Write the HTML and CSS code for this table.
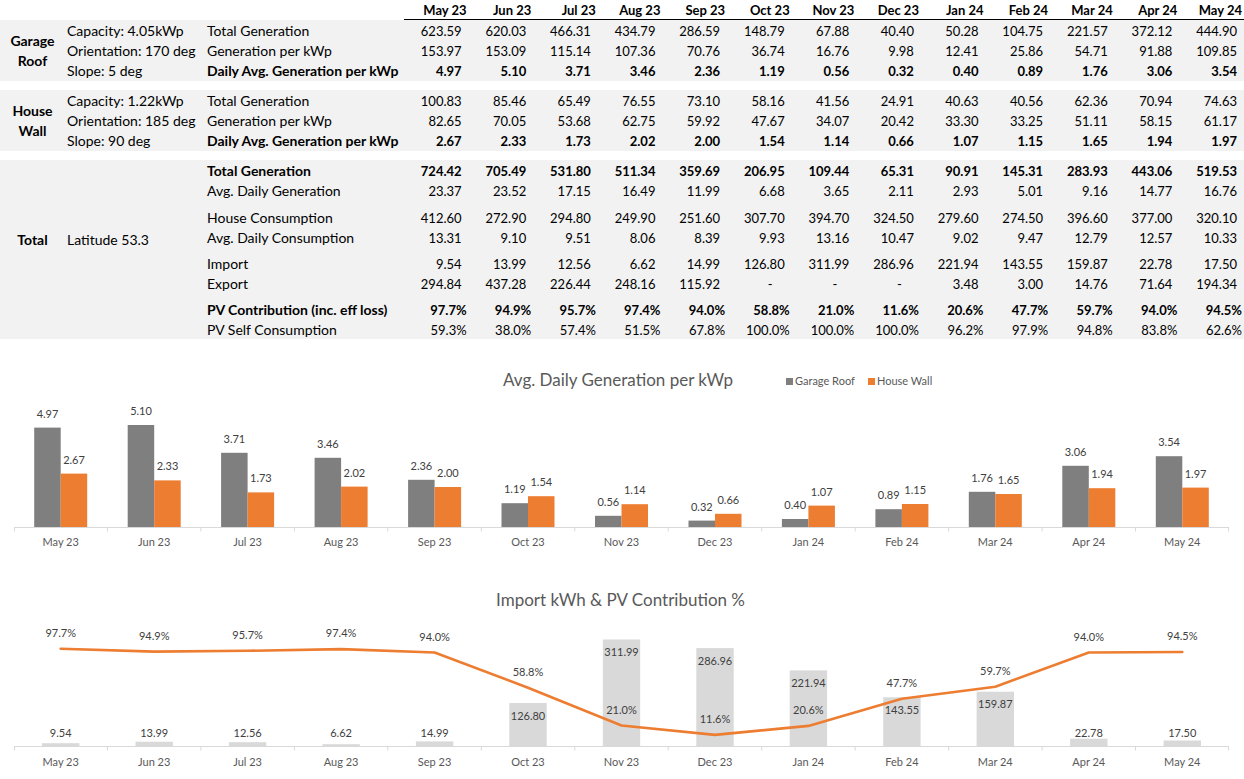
FILE: index.html
```html
<!DOCTYPE html>
<html>
<head>
<meta charset="utf-8">
<title>PV Generation</title>
<link rel="stylesheet" href="styles.css">
</head>
<body>
<div class="sheet">
  <div class="head">
    <div class="spacer"></div>
    <div class="m">May 23</div><div class="m">Jun 23</div><div class="m">Jul 23</div><div class="m">Aug 23</div><div class="m">Sep 23</div><div class="m">Oct 23</div><div class="m">Nov 23</div><div class="m">Dec 23</div><div class="m">Jan 24</div><div class="m">Feb 24</div><div class="m">Mar 24</div><div class="m">Apr 24</div><div class="m">May 24</div>
  </div>

  <div class="block">
    <div class="a">Garage<br>Roof</div>
    <div class="b"><div>Capacity: 4.05kWp</div><div>Orientation: 170 deg</div><div>Slope: 5 deg</div></div>
    <div class="rows">
      <div class="row"><span class="l">Total Generation</span><span>623.59</span><span>620.03</span><span>466.31</span><span>434.79</span><span>286.59</span><span>148.79</span><span>67.88</span><span>40.40</span><span>50.28</span><span>104.75</span><span>221.57</span><span>372.12</span><span>444.90</span></div>
      <div class="row"><span class="l">Generation per kWp</span><span>153.97</span><span>153.09</span><span>115.14</span><span>107.36</span><span>70.76</span><span>36.74</span><span>16.76</span><span>9.98</span><span>12.41</span><span>25.86</span><span>54.71</span><span>91.88</span><span>109.85</span></div>
      <div class="row bold"><span class="l">Daily Avg. Generation per kWp</span><span>4.97</span><span>5.10</span><span>3.71</span><span>3.46</span><span>2.36</span><span>1.19</span><span>0.56</span><span>0.32</span><span>0.40</span><span>0.89</span><span>1.76</span><span>3.06</span><span>3.54</span></div>
    </div>
  </div>

  <div class="block">
    <div class="a">House<br>Wall</div>
    <div class="b"><div>Capacity: 1.22kWp</div><div>Orientation: 185 deg</div><div>Slope: 90 deg</div></div>
    <div class="rows">
      <div class="row"><span class="l">Total Generation</span><span>100.83</span><span>85.46</span><span>65.49</span><span>76.55</span><span>73.10</span><span>58.16</span><span>41.56</span><span>24.91</span><span>40.63</span><span>40.56</span><span>62.36</span><span>70.94</span><span>74.63</span></div>
      <div class="row"><span class="l">Generation per kWp</span><span>82.65</span><span>70.05</span><span>53.68</span><span>62.75</span><span>59.92</span><span>47.67</span><span>34.07</span><span>20.42</span><span>33.30</span><span>33.25</span><span>51.11</span><span>58.15</span><span>61.17</span></div>
      <div class="row bold"><span class="l">Daily Avg. Generation per kWp</span><span>2.67</span><span>2.33</span><span>1.73</span><span>2.02</span><span>2.00</span><span>1.54</span><span>1.14</span><span>0.66</span><span>1.07</span><span>1.15</span><span>1.65</span><span>1.94</span><span>1.97</span></div>
    </div>
  </div>

  <div class="block total">
    <div class="a top">Total</div>
    <div class="b top"><div>Latitude 53.3</div></div>
    <div class="rows">
      <div class="grp">
        <div class="row bold"><span class="l">Total Generation</span><span>724.42</span><span>705.49</span><span>531.80</span><span>511.34</span><span>359.69</span><span>206.95</span><span>109.44</span><span>65.31</span><span>90.91</span><span>145.31</span><span>283.93</span><span>443.06</span><span>519.53</span></div>
        <div class="row"><span class="l">Avg. Daily Generation</span><span>23.37</span><span>23.52</span><span>17.15</span><span>16.49</span><span>11.99</span><span>6.68</span><span>3.65</span><span>2.11</span><span>2.93</span><span>5.01</span><span>9.16</span><span>14.77</span><span>16.76</span></div>
      </div>
      <div class="grp g7">
        <div class="row"><span class="l">House Consumption</span><span>412.60</span><span>272.90</span><span>294.80</span><span>249.90</span><span>251.60</span><span>307.70</span><span>394.70</span><span>324.50</span><span>279.60</span><span>274.50</span><span>396.60</span><span>377.00</span><span>320.10</span></div>
        <div class="row"><span class="l">Avg. Daily Consumption</span><span>13.31</span><span>9.10</span><span>9.51</span><span>8.06</span><span>8.39</span><span>9.93</span><span>13.16</span><span>10.47</span><span>9.02</span><span>9.47</span><span>12.79</span><span>12.57</span><span>10.33</span></div>
      </div>
      <div class="grp g6">
        <div class="row"><span class="l">Import</span><span>9.54</span><span>13.99</span><span>12.56</span><span>6.62</span><span>14.99</span><span>126.80</span><span>311.99</span><span>286.96</span><span>221.94</span><span>143.55</span><span>159.87</span><span>22.78</span><span>17.50</span></div>
        <div class="row"><span class="l">Export</span><span>294.84</span><span>437.28</span><span>226.44</span><span>248.16</span><span>115.92</span><span class="dash">-</span><span class="dash">-</span><span class="dash">-</span><span>3.48</span><span>3.00</span><span>14.76</span><span>71.64</span><span>194.34</span></div>
      </div>
      <div class="grp g6">
        <div class="row bold pct"><span class="l">PV Contribution (inc. eff loss)</span><span>97.7%</span><span>94.9%</span><span>95.7%</span><span>97.4%</span><span>94.0%</span><span>58.8%</span><span>21.0%</span><span>11.6%</span><span>20.6%</span><span>47.7%</span><span>59.7%</span><span>94.0%</span><span>94.5%</span></div>
        <div class="row pct"><span class="l">PV Self Consumption</span><span>59.3%</span><span>38.0%</span><span>57.4%</span><span>51.5%</span><span>67.8%</span><span>100.0%</span><span>100.0%</span><span>100.0%</span><span>96.2%</span><span>97.9%</span><span>94.8%</span><span>83.8%</span><span>62.6%</span></div>
      </div>
    </div>
  </div>

  <svg class="chart" viewBox="0 339 1244 221" width="1244" height="221">
    <text class="title" x="618" y="386">Avg. Daily Generation per kWp</text>
    <rect x="786" y="378" width="7" height="7" fill="#7f7f7f"/>
    <text class="leg" x="795" y="385">Garage Roof</text>
    <rect x="868" y="378" width="7" height="7" fill="#ed7d31"/>
    <text class="leg" x="877" y="385">House Wall</text>
    <g fill="#7f7f7f">
      <rect x="34.2" y="427.6" width="26.5" height="99.4"/>
      <rect x="127.7" y="425" width="26.5" height="102"/>
      <rect x="221.1" y="452.8" width="26.5" height="74.2"/>
      <rect x="314.6" y="457.8" width="26.5" height="69.2"/>
      <rect x="408.1" y="479.8" width="26.5" height="47.2"/>
      <rect x="501.5" y="503.2" width="26.5" height="23.8"/>
      <rect x="595" y="515.8" width="26.5" height="11.2"/>
      <rect x="688.5" y="520.6" width="26.5" height="6.4"/>
      <rect x="781.9" y="519" width="26.5" height="8"/>
      <rect x="875.4" y="509.2" width="26.5" height="17.8"/>
      <rect x="968.8" y="491.8" width="26.5" height="35.2"/>
      <rect x="1062.3" y="465.8" width="26.5" height="61.2"/>
      <rect x="1155.8" y="456.2" width="26.5" height="70.8"/>
    </g>
    <g fill="#ed7d31">
      <rect x="60.7" y="473.6" width="26.5" height="53.4"/>
      <rect x="154.2" y="480.4" width="26.5" height="46.6"/>
      <rect x="247.6" y="492.4" width="26.5" height="34.6"/>
      <rect x="341.1" y="486.6" width="26.5" height="40.4"/>
      <rect x="434.6" y="487" width="26.5" height="40"/>
      <rect x="528" y="496.2" width="26.5" height="30.8"/>
      <rect x="621.5" y="504.2" width="26.5" height="22.8"/>
      <rect x="715" y="513.8" width="26.5" height="13.2"/>
      <rect x="808.4" y="505.6" width="26.5" height="21.4"/>
      <rect x="901.9" y="504" width="26.5" height="23"/>
      <rect x="995.3" y="494" width="26.5" height="33"/>
      <rect x="1088.8" y="488.2" width="26.5" height="38.8"/>
      <rect x="1182.3" y="487.6" width="26.5" height="39.4"/>
    </g>
    <g class="dl">
      <text x="47.5" y="417.6">4.97</text><text x="74" y="463.6">2.67</text>
      <text x="141" y="415">5.10</text><text x="167.5" y="470.4">2.33</text>
      <text x="234.4" y="442.8">3.71</text><text x="260.9" y="482.4">1.73</text>
      <text x="327.9" y="447.8">3.46</text><text x="354.4" y="476.6">2.02</text>
      <text x="421.4" y="469.8">2.36</text><text x="447.9" y="477">2.00</text>
      <text x="514.8" y="493.2">1.19</text><text x="541.3" y="486.2">1.54</text>
      <text x="608.3" y="505.8">0.56</text><text x="634.8" y="494.2">1.14</text>
      <text x="701.8" y="510.6">0.32</text><text x="728.3" y="503.8">0.66</text>
      <text x="795.2" y="509">0.40</text><text x="821.7" y="495.6">1.07</text>
      <text x="888.7" y="499.2">0.89</text><text x="915.2" y="494">1.15</text>
      <text x="982.1" y="481.8">1.76</text><text x="1008.6" y="484">1.65</text>
      <text x="1075.6" y="455.8">3.06</text><text x="1102.1" y="478.2">1.94</text>
      <text x="1169.1" y="446.2">3.54</text><text x="1195.6" y="477.6">1.97</text>
    </g>
    <path class="axis" d="M14 527.5H1229M14.5 527V531.5M107.5 527V531.5M200.9 527V531.5M294.4 527V531.5M387.8 527V531.5M481.3 527V531.5M574.8 527V531.5M668.2 527V531.5M761.7 527V531.5M855.2 527V531.5M948.6 527V531.5M1042.1 527V531.5M1135.5 527V531.5M1228.5 527V531.5"/>
    <g class="ax">
      <text x="60.7" y="546">May 23</text><text x="154.2" y="546">Jun 23</text><text x="247.6" y="546">Jul 23</text><text x="341.1" y="546">Aug 23</text><text x="434.6" y="546">Sep 23</text><text x="528" y="546">Oct 23</text><text x="621.5" y="546">Nov 23</text><text x="715" y="546">Dec 23</text><text x="808.4" y="546">Jan 24</text><text x="901.9" y="546">Feb 24</text><text x="995.3" y="546">Mar 24</text><text x="1088.8" y="546">Apr 24</text><text x="1182.3" y="546">May 24</text>
    </g>
  </svg>

  <svg class="chart" viewBox="0 560 1244 219" width="1244" height="219">
    <text class="title" x="620.5" y="606">Import kWh &amp; PV Contribution %</text>
    <g fill="#d9d9d9">
      <rect x="42" y="743.2" width="37.4" height="3.3"/>
      <rect x="135.5" y="741.7" width="37.4" height="4.8"/>
      <rect x="228.9" y="742.2" width="37.4" height="4.3"/>
      <rect x="322.4" y="744.2" width="37.4" height="2.3"/>
      <rect x="415.9" y="741.4" width="37.4" height="5.1"/>
      <rect x="509.3" y="703" width="37.4" height="43.5"/>
      <rect x="602.8" y="639.5" width="37.4" height="107"/>
      <rect x="696.3" y="648.1" width="37.4" height="98.4"/>
      <rect x="789.7" y="670.4" width="37.4" height="76.1"/>
      <rect x="883.2" y="697.3" width="37.4" height="49.2"/>
      <rect x="976.6" y="691.7" width="37.4" height="54.8"/>
      <rect x="1070.1" y="738.7" width="37.4" height="7.8"/>
      <rect x="1163.6" y="740.5" width="37.4" height="6"/>
    </g>
    <path class="axis" d="M14 746.5H1229M14.5 746V750.5M107.5 746V750.5M200.9 746V750.5M294.4 746V750.5M387.8 746V750.5M481.3 746V750.5M574.8 746V750.5M668.2 746V750.5M761.7 746V750.5M855.2 746V750.5M948.6 746V750.5M1042.1 746V750.5M1135.5 746V750.5M1228.5 746V750.5"/>
    <g class="dl">
      <text x="60.7" y="737.3">9.54</text><text x="154.2" y="737.3">13.99</text><text x="247.6" y="737.3">12.56</text><text x="341.1" y="737.3">6.62</text><text x="434.6" y="737.3">14.99</text><text x="528" y="719.7">126.80</text><text x="621.5" y="656.2">311.99</text><text x="715" y="664.8">286.96</text><text x="808.4" y="687.1">221.94</text><text x="901.9" y="714">143.55</text><text x="995.3" y="708.4">159.87</text><text x="1088.8" y="737.3">22.78</text><text x="1182.3" y="737.3">17.50</text>
    </g>
    <polyline class="line" points="60.7,648.8 154.2,651.6 247.6,650.8 341.1,649.1 434.6,652.5 528,687.7 621.5,725.5 715,734.9 808.4,725.9 901.9,698.8 995.3,686.8 1088.8,652.5 1182.3,652"/>
    <g class="dl">
      <text x="60.7" y="636.8">97.7%</text><text x="154.2" y="639.6">94.9%</text><text x="247.6" y="638.8">95.7%</text><text x="341.1" y="637.1">97.4%</text><text x="434.6" y="640.5">94.0%</text><text x="528" y="675.7">58.8%</text><text x="621.5" y="713.5">21.0%</text><text x="715" y="722.9">11.6%</text><text x="808.4" y="713.9">20.6%</text><text x="901.9" y="686.8">47.7%</text><text x="995.3" y="674.8">59.7%</text><text x="1088.8" y="640.5">94.0%</text><text x="1182.3" y="640">94.5%</text>
    </g>
    <g class="ax">
      <text x="60.7" y="766">May 23</text><text x="154.2" y="766">Jun 23</text><text x="247.6" y="766">Jul 23</text><text x="341.1" y="766">Aug 23</text><text x="434.6" y="766">Sep 23</text><text x="528" y="766">Oct 23</text><text x="621.5" y="766">Nov 23</text><text x="715" y="766">Dec 23</text><text x="808.4" y="766">Jan 24</text><text x="901.9" y="766">Feb 24</text><text x="995.3" y="766">Mar 24</text><text x="1088.8" y="766">Apr 24</text><text x="1182.3" y="766">May 24</text>
    </g>
  </svg>
</div>
</body>
</html>
```

FILE: styles.css
```css
html, body {
  margin: 0;
  padding: 0;
  background: #ffffff;
}
body {
  font-family: Lato, "Open Sans", sans-serif;
  font-size: 13px;
  color: #000000;
}
.sheet {
  width: 1244px;
}
.head {
  display: grid;
  grid-template-columns: 404px repeat(13, 1fr);
  height: 20px;
}
.head .m {
  border-bottom: 1px solid #000000;
  font-weight: bold;
  text-align: right;
  padding-right: 2px;
  line-height: 20px;
  height: 19px;
}
.block {
  display: flex;
  background: #f2f2f2;
  margin-top: 9px;
}
.head + .block {
  margin-top: 0;
}
.a {
  width: 65px;
  flex: none;
  font-weight: bold;
  font-size: 14px;
  text-align: center;
  display: flex;
  align-items: center;
  justify-content: center;
  line-height: 20px;
  padding-top: 1px;
  box-sizing: border-box;
}
.b {
  width: 140px;
  flex: none;
  font-size: 14px;
  padding-left: 2px;
  box-sizing: border-box;
  line-height: 20px;
  padding-top: 1px;
}
.a.top {
  align-items: flex-start;
  padding-top: 70px;
}
.b.top {
  padding-top: 70px;
}
.rows {
  flex: 1;
  display: flex;
  flex-direction: column;
}
.row {
  display: grid;
  grid-template-columns: 199px repeat(13, 1fr);
  height: 20px;
  line-height: 20px;
  padding-top: 1px;
  box-sizing: border-box;
}
.row span {
  text-align: right;
  padding-right: 7px;
  white-space: nowrap;
}
.row span.l {
  text-align: left;
  font-size: 14px;
  padding-left: 2px;
  padding-right: 0;
}
.row.pct span {
  padding-right: 2px;
}
.row span.dash {
  padding-right: 19px;
}
.row.pct span.l {
  padding-right: 0;
}
.bold {
  font-weight: bold;
}
.g7 {
  margin-top: 7px;
}
.g6 {
  margin-top: 6px;
}
.chart {
  display: block;
  font-family: Lato, "Open Sans", sans-serif;
}
.chart .title {
  font-size: 17px;
  fill: #595959;
  text-anchor: middle;
}
.chart .leg {
  font-size: 11px;
  fill: #595959;
}
.chart .dl text {
  font-size: 11px;
  fill: #404040;
  text-anchor: middle;
}
.chart .ax text {
  font-size: 11px;
  fill: #595959;
  text-anchor: middle;
}
.chart .axis {
  stroke: #d9d9d9;
  stroke-width: 1;
  fill: none;
}
.chart .line {
  fill: none;
  stroke: #ed7d31;
  stroke-width: 2.6;
  stroke-linejoin: round;
  stroke-linecap: round;
}
```
